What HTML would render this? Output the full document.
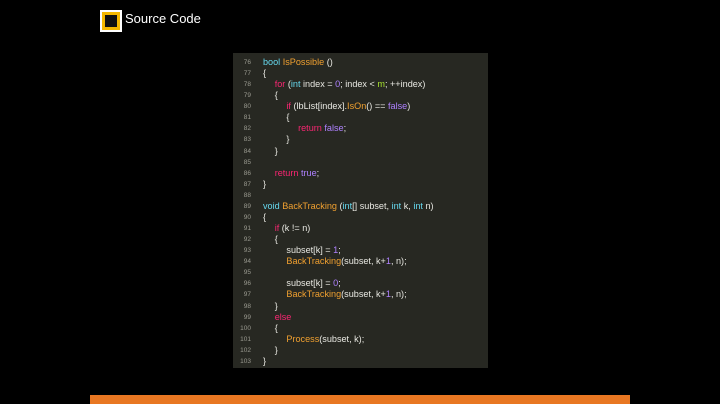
<html><head><style>
body{margin:0;background:#000;width:720px;height:404px;overflow:hidden;position:relative;font-family:"Liberation Sans",sans-serif}
.icon{position:absolute;left:100px;top:10px;width:22px;height:22px;background:#fff;box-sizing:border-box;padding:2px}
.icon div{width:18px;height:18px;box-sizing:border-box;border:3px solid #f5b800;background:#111}
.title{position:absolute;left:125px;top:11px;color:#fff;font-size:13px}
.panel{position:absolute;left:233px;top:53px;width:255px;height:315px;background:#272822}
.ln{position:absolute;left:0;width:18px;text-align:right;color:#9a9a90;font-size:6.5px}
.c{position:absolute;left:30px;color:#e8e8e2;font-size:9.1px;white-space:pre}
.k{color:#66d9ef}.f{color:#f0a030}.p{color:#f92672}.v{color:#ae81ff}.g{color:#a6e22e}
.bar{position:absolute;left:90px;top:395px;width:540px;height:9px;background:#e87722}
</style></head><body>
<div class="icon"><div></div></div>
<div class="title">Source Code</div>
<div class="panel" id="p"></div>
<div class="bar"></div>
<script>
var L=[
'<span class="k">bool</span> <span class="f">IsPossible</span> ()',
'{',
'    <span class="p">for</span> (<span class="k">int</span> index = <span class="v">0</span>; index &lt; <span class="g">m</span>; ++index)',
'    {',
'        <span class="p">if</span> (lbList[index].<span class="f">IsOn</span>() == <span class="v">false</span>)',
'        {',
'            <span class="p">return</span> <span class="v">false</span>;',
'        }',
'    }',
'',
'    <span class="p">return</span> <span class="v">true</span>;',
'}',
'',
'<span class="k">void</span> <span class="f">BackTracking</span> (<span class="k">int</span>[] subset, <span class="k">int</span> k, <span class="k">int</span> n)',
'{',
'    <span class="p">if</span> (k != n)',
'    {',
'        subset[k] = <span class="v">1</span>;',
'        <span class="f">BackTracking</span>(subset, k+<span class="v">1</span>, n);',
'',
'        subset[k] = <span class="v">0</span>;',
'        <span class="f">BackTracking</span>(subset, k+<span class="v">1</span>, n);',
'    }',
'    <span class="p">else</span>',
'    {',
'        <span class="f">Process</span>(subset, k);',
'    }',
'}'];
var h='';
for(var i=0;i<L.length;i++){var y=4+i*11.07;
h+='<div class="ln" style="top:'+(y+2)+'px">'+(76+i)+'</div><div class="c" style="top:'+y+'px">'+L[i].replace(/^( +)/,function(s){return '<span style="display:inline-block;width:'+(s.length/4*11.7)+'px"></span>'})+'</div>';}
document.getElementById('p').innerHTML=h;
</script>
</body></html>
